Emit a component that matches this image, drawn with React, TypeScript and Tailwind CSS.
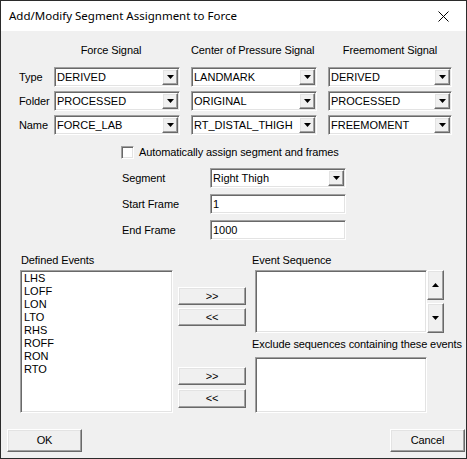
import React from 'react';

const SUNKEN =
  'bg-white border border-t-[#a0a0a0] border-l-[#a0a0a0] border-b-white border-r-white shadow-[inset_1px_1px_0_#696969,inset_-1px_-1px_0_#e3e3e3]';
const RAISED =
  'bg-[#f0f0f0] border border-t-white border-l-white border-b-[#696969] border-r-[#696969] shadow-[inset_-1px_-1px_0_#a0a0a0,inset_1px_1px_0_#e3e3e3]';

function Arrow({ up = false }: { up?: boolean }) {
  return (
    <svg width="7" height="4" viewBox="0 0 7 4">
      {up ? <path d="M3.5 0 L7 4 L0 4 Z" fill="#000" /> : <path d="M0 0 L7 0 L3.5 4 Z" fill="#000" />}
    </svg>
  );
}

function Combo({ value, width }: { value: string; width: string }) {
  return (
    <div className={`${SUNKEN} ${width} h-[20px] flex items-center pl-[2px] pr-[1px]`}>
      <span className="flex-1 leading-none whitespace-nowrap overflow-hidden">{value}</span>
      <div className={`${RAISED} w-[16px] h-[16px] flex items-center justify-center shrink-0`}>
        <Arrow />
      </div>
    </div>
  );
}

function Button({ label, className }: { label: string; className: string }) {
  return <div className={`${RAISED} ${className} flex items-center justify-center`}>{label}</div>;
}

const ROWS = [
  { label: 'Type', values: ['DERIVED', 'LANDMARK', 'DERIVED'] },
  { label: 'Folder', values: ['PROCESSED', 'ORIGINAL', 'PROCESSED'] },
  { label: 'Name', values: ['FORCE_LAB', 'RT_DISTAL_THIGH', 'FREEMOMENT'] },
];

const EVENTS = ['LHS', 'LOFF', 'LON', 'LTO', 'RHS', 'ROFF', 'RON', 'RTO'];

// static labels: MS Sans Serif is a touch narrower than Arial
const LABEL = 'whitespace-nowrap text-[11px] tracking-[-0.1px]';

export default function App() {
  return (
    <div className="w-[467px] h-[459px] border border-[#2b2b2b] bg-[#f0f0f0] flex flex-col font-['Liberation_Sans',sans-serif] text-[11px] text-black overflow-hidden">
      {/* Title bar */}
      <div className="h-[30px] bg-white flex items-center justify-between pl-[8px] shrink-0">
        <span className="font-['Noto_Sans',sans-serif] text-[11.5px] whitespace-nowrap">
          Add/Modify Segment Assignment to Force
        </span>
        <div className="w-[46px] h-[30px] flex items-center justify-center">
          <svg width="11" height="11" viewBox="0 0 11 11">
            <path d="M0.5 0.5 L10.5 10.5 M10.5 0.5 L0.5 10.5" stroke="#000" strokeWidth="1" />
          </svg>
        </div>
      </div>

      {/* Signal headers */}
      <div className={`flex ml-[53px] mt-[12px] gap-[11px] h-[14px] leading-[14px] ${LABEL}`}>
        <div className="w-[126px] text-center pr-[12px]">Force Signal</div>
        <div className="w-[126px] text-center pr-[6px]">Center of Pressure Signal</div>
        <div className="w-[124px] text-center">Freemoment Signal</div>
      </div>

      {/* Signal combos */}
      <div className="flex flex-col gap-[4px] mt-[10px]">
        {ROWS.map((row) => (
          <div key={row.label} className="flex items-center">
            <div className={`w-[53px] pl-[18px] ${LABEL}`}>{row.label}</div>
            <div className="flex gap-[11px]">
              <Combo value={row.values[0]} width="w-[126px]" />
              <Combo value={row.values[1]} width="w-[126px]" />
              <Combo value={row.values[2]} width="w-[124px]" />
            </div>
          </div>
        ))}
      </div>

      {/* Auto assign */}
      <div className="flex items-center ml-[120px] mt-[11px] h-[13px] gap-[5px]">
        <div className={`${SUNKEN} w-[13px] h-[13px]`} />
        <span className={LABEL}>Automatically assign segment and frames</span>
      </div>

      {/* Segment / frames */}
      <div className="flex flex-col gap-[6px] ml-[121px] mt-[9px]">
        <div className="flex items-center">
          <div className={`w-[88px] ${LABEL}`}>Segment</div>
          <Combo value="Right Thigh" width="w-[136px]" />
        </div>
        <div className="flex items-center">
          <div className={`w-[88px] ${LABEL}`}>Start Frame</div>
          <div className={`${SUNKEN} w-[136px] h-[20px] flex items-center pl-[2px]`}>1</div>
        </div>
        <div className="flex items-center">
          <div className={`w-[88px] ${LABEL}`}>End Frame</div>
          <div className={`${SUNKEN} w-[136px] h-[20px] flex items-center pl-[2px]`}>1000</div>
        </div>
      </div>

      {/* Events */}
      <div className="flex mt-[13px] ml-[19px]">
        <div className="flex flex-col">
          <div className={`h-[14px] leading-[14px] pl-[1px] ${LABEL}`}>Defined Events</div>
          <div className={`${SUNKEN} w-[153px] h-[143px] mt-[3px] pt-[1px] pl-[3px]`}>
            {EVENTS.map((ev) => (
              <div key={ev} className="h-[13px] leading-[13px]">
                {ev}
              </div>
            ))}
          </div>
        </div>

        <div className={`flex flex-col ml-[5px] ${LABEL}`}>
          <Button label=">>" className="w-[68px] h-[18px] mt-[34px]" />
          <Button label="<<" className="w-[68px] h-[18px] mt-[3px]" />
          <Button label=">>" className="w-[68px] h-[18px] mt-[41px]" />
          <Button label="<<" className="w-[68px] h-[19px] mt-[4px]" />
        </div>

        <div className="flex flex-col ml-[6px]">
          <div className={`h-[14px] leading-[14px] ${LABEL}`}>Event Sequence</div>
          <div className="flex mt-[3px] ml-[3px]">
            <div className={`${SUNKEN} w-[172px] h-[63px]`} />
            <div className="flex flex-col gap-[3px]">
              <div className={`${RAISED} w-[17px] h-[30px] flex items-center justify-center`}>
                <Arrow up />
              </div>
              <div className={`${RAISED} w-[17px] h-[30px] flex items-center justify-center`}>
                <Arrow />
              </div>
            </div>
          </div>
          <div className={`h-[14px] leading-[14px] mt-[4px] ${LABEL}`}>
            Exclude sequences containing these events
          </div>
          <div className={`${SUNKEN} w-[172px] h-[56px] mt-[6px] ml-[3px]`} />
        </div>
      </div>

      {/* Footer */}
      <div className={`flex justify-between mt-[16px] pl-[6px] pr-[1px] ${LABEL}`}>
        <Button label="OK" className="w-[75px] h-[23px]" />
        <Button label="Cancel" className="w-[75px] h-[23px]" />
      </div>
    </div>
  );
}
